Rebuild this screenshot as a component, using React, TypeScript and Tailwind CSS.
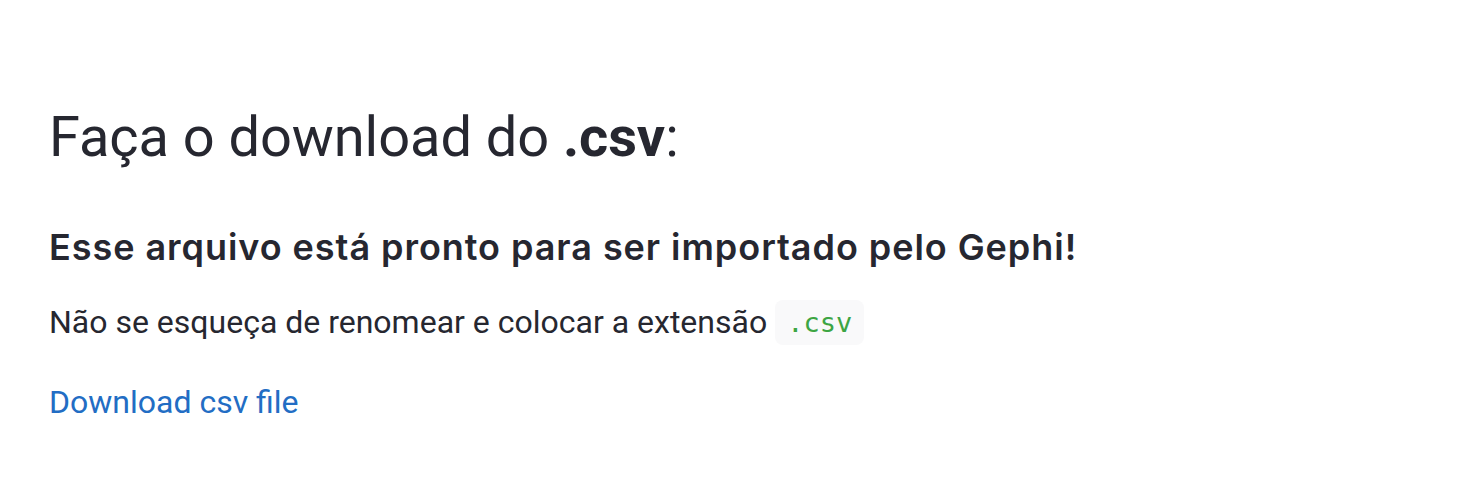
export default function App() {
  return (
    <div className="min-h-[504px] w-full bg-white text-[#262730]" style={{ fontFamily: 'Roboto, "Noto Sans", sans-serif' }}>
      <div className="flex flex-col items-start px-[49px] pt-[103px]">
        <h1 className="text-[56px] leading-[68px] font-normal tracking-[-0.08px]">
          Faça o download do <strong className="font-bold">.csv</strong>:
        </h1>
        <h3
          className="mt-[54px] text-[36px] leading-[44px] font-semibold tracking-[0.95px]"
          style={{ fontFamily: 'Inter, Roboto, sans-serif' }}
        >
          Esse arquivo está pronto para ser importado pelo Gephi!
        </h3>
        <p className="mt-[29px] flex h-[48px] items-center text-[32px] leading-[48px]">
          Não se esqueça de renomear e colocar a extensão
          <code
            className="ml-[8px] h-[45px] rounded-[8px] bg-[#f9f9fa] px-[12px] text-[27px] leading-[45px] text-[#3da543]"
            style={{ fontFamily: '"DejaVu Sans Mono", "Liberation Mono", monospace' }}
          >
            .csv
          </code>
        </p>
        <a href="#" className="mt-[32px] text-[32px] leading-[48px] text-[#226dc4]">
          Download csv file
        </a>
      </div>
    </div>
  );
}
